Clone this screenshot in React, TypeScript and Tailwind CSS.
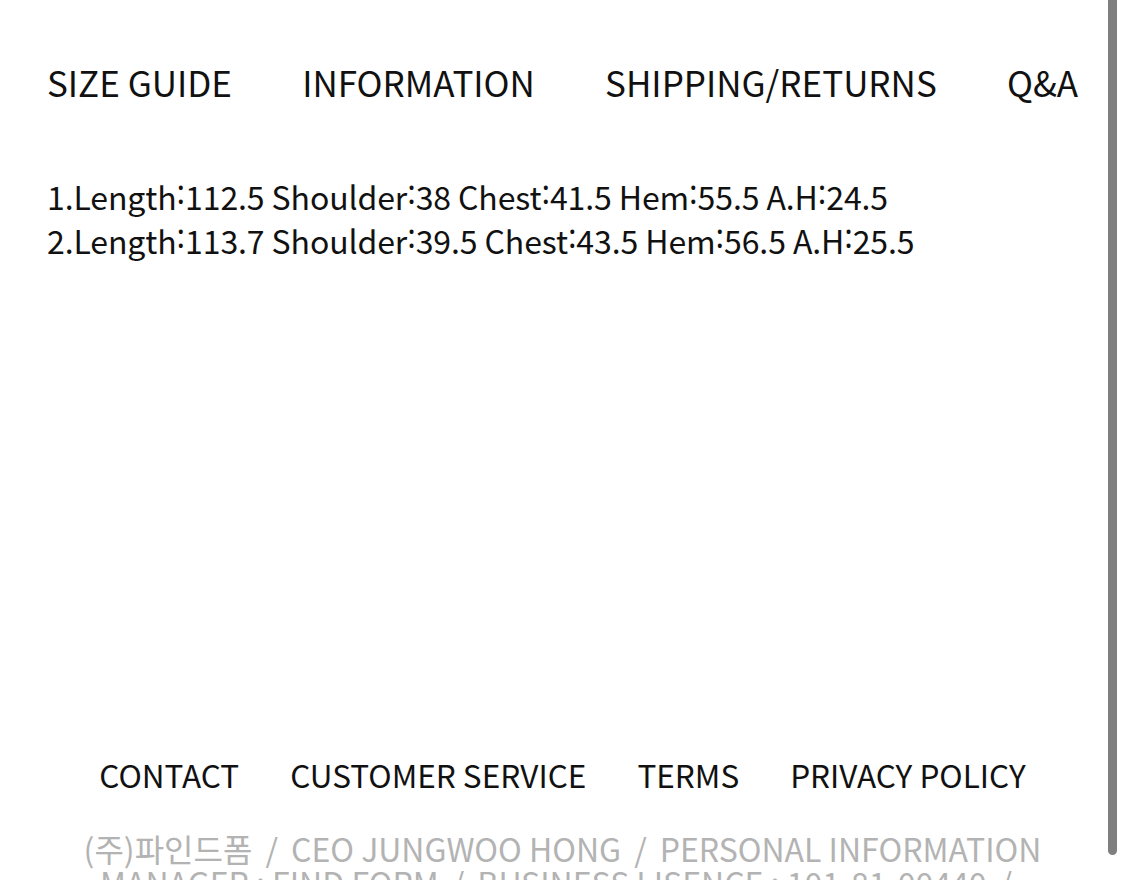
const tabs = ['SIZE GUIDE', 'INFORMATION', 'SHIPPING/RETURNS', 'Q&A'];
const footerLinks = ['CONTACT', 'CUSTOMER SERVICE', 'TERMS', 'PRIVACY POLICY'];

const sizes = [
  '1.Length˸112.5 Shoulder˸38 Chest˸41.5 Hem˸55.5 A.H˸24.5',
  '2.Length˸113.7 Shoulder˸39.5 Chest˸43.5 Hem˸56.5 A.H˸25.5',
];

const companyLines = [
  ['(주)파인드폼', 'CEO JUNGWOO HONG', 'PERSONAL INFORMATION'],
  ['MANAGER : FIND FORM', 'BUSINESS LISENCE : 101-81-00440', ''],
];

export default function App() {
  return (
    <div
      className="relative w-[1125px] h-[880px] overflow-hidden bg-white text-[#111]"
      style={{ fontFamily: '"Noto Sans CJK KR", "Noto Sans", sans-serif' }}
    >
      {/* tab menu */}
      <div className="flex justify-between px-[47px] pt-[58px] text-[35px] leading-[48px]">
        {tabs.map((t) => (
          <span key={t}>{t}</span>
        ))}
      </div>

      {/* size info */}
      <div className="px-[47px] mt-[68px] text-[32px] leading-[44px] tracking-[-0.1px]">
        {sizes.map((s) => (
          <p key={s}>{s}</p>
        ))}
      </div>

      {/* footer */}
      <div className="mt-[490px]">
        <div className="flex justify-center gap-[51px] text-[31.5px] leading-[44px]">
          {footerLinks.map((l) => (
            <span key={l}>{l}</span>
          ))}
        </div>
        <div className="mt-[35px] text-center text-[32px] leading-[34px] text-[#b3b3b3]">
          {companyLines.map((parts, i) => (
            <p key={i} className="whitespace-nowrap">
              {parts.map((p, j) => (
                <span key={j}>
                  {j > 0 && <span className="mx-[13px]">/</span>}
                  {p}
                </span>
              ))}
            </p>
          ))}
        </div>
      </div>

      {/* scrollbar */}
      <div className="absolute right-[8px] top-[-10px] w-[9px] h-[865px] rounded-full bg-[#7f7f7f]" />
    </div>
  );
}
